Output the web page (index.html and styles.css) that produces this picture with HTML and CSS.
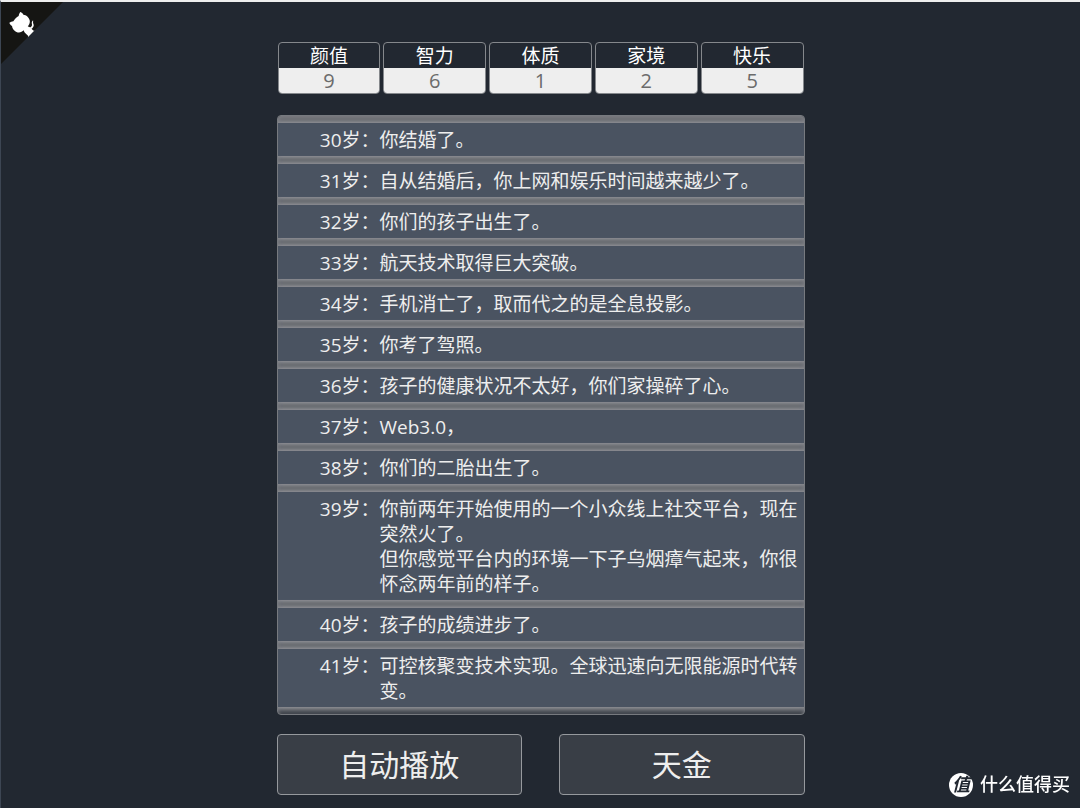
FILE: index.html
```html
<!DOCTYPE html>
<html lang="zh-CN">
<head>
<meta charset="utf-8">
<meta name="viewport" content="width=device-width, initial-scale=1">
<title>人生重开模拟器</title>
<link rel="stylesheet" href="styles.css">
</head>
<body>
<a class="corner" href="#" aria-label="GitHub">
  <svg viewBox="0 0 250 250" aria-hidden="true">
    <g transform="translate(250 0) scale(-1 1)">
      <path fill="#151513" d="M0,0 L250,250 L250,0 Z"/>
      <path fill="#fff" d="M128.3,109.0 C113.8,99.7 119.0,89.6 119.0,89.6 C122.0,82.7 120.5,78.6 120.5,78.6 C119.2,72.0 123.4,76.3 123.4,76.3 C127.3,80.9 125.5,87.3 125.5,87.3 C122.9,97.6 130.6,101.9 134.4,103.2"/>
      <path fill="#fff" d="M115.0,115.0 C114.9,115.1 118.7,116.5 119.8,115.4 L133.7,101.6 C136.9,99.2 139.9,98.4 142.2,98.6 C133.8,88.0 127.5,74.4 143.8,58.0 C148.5,53.4 154.0,51.2 159.7,51.0 C160.3,49.4 163.2,43.6 171.4,40.1 C171.4,40.1 176.1,42.5 178.8,56.2 C183.1,58.6 187.2,61.8 190.9,65.4 C194.5,69.0 197.7,73.2 200.1,77.6 C213.8,80.2 216.3,84.9 216.3,84.9 C212.7,93.1 206.9,96.0 205.4,96.6 C205.1,102.4 203.0,107.8 198.3,112.5 C181.9,128.9 168.3,122.5 157.7,114.1 C157.9,116.9 156.7,120.9 152.7,124.9 L141.0,136.5 C139.8,137.7 141.6,141.9 141.8,141.8 Z"/>
    </g>
  </svg>
</a>
<main class="game">
  <dl class="stats">
    <div class="stat"><dt>颜值</dt><dd>9</dd></div>
    <div class="stat"><dt>智力</dt><dd>6</dd></div>
    <div class="stat"><dt>体质</dt><dd>1</dd></div>
    <div class="stat"><dt>家境</dt><dd>2</dd></div>
    <div class="stat"><dt>快乐</dt><dd>5</dd></div>
  </dl>
  <ul class="log">
    <li><span class="age">30岁：</span><p>你结婚了。</p></li>
    <li><span class="age">31岁：</span><p>自从结婚后，你上网和娱乐时间越来越少了。</p></li>
    <li><span class="age">32岁：</span><p>你们的孩子出生了。</p></li>
    <li><span class="age">33岁：</span><p>航天技术取得巨大突破。</p></li>
    <li><span class="age">34岁：</span><p>手机消亡了，取而代之的是全息投影。</p></li>
    <li><span class="age">35岁：</span><p>你考了驾照。</p></li>
    <li><span class="age">36岁：</span><p>孩子的健康状况不太好，你们家操碎了心。</p></li>
    <li><span class="age">37岁：</span><p>Web3.0，</p></li>
    <li><span class="age">38岁：</span><p>你们的二胎出生了。</p></li>
    <li><span class="age">39岁：</span><p>你前两年开始使用的一个小众线上社交平台，现在突然火了。<br>但你感觉平台内的环境一下子乌烟瘴气起来，你很怀念两年前的样子。</p></li>
    <li><span class="age">40岁：</span><p>孩子的成绩进步了。</p></li>
    <li><span class="age">41岁：</span><p>可控核聚变技术实现。全球迅速向无限能源时代转变。</p></li>
  </ul>
  <div class="actions">
    <button type="button">自动播放</button>
    <button type="button">天金</button>
  </div>
</main>
<div class="watermark"><span class="badge">值</span><span>什么值得买</span></div>
</body>
</html>
```
FILE: styles.css
```css
* { box-sizing: border-box; }

body {
  margin: 0;
  min-height: 100vh;
  border-top: 2px solid #eeeeee;
  border-left: 1px solid #3d4653;
  background: #222831;
  color: #eeeeee;
  font: 19px/25px "Open Sans", "Noto Sans CJK SC", sans-serif;
}

.corner {
  position: absolute;
  top: 2px;
  left: 1px;
  width: 62px;
}
.corner svg { display: block; width: 100%; }

.game {
  max-width: 528px;
  margin: 0 auto;
  padding: 40px 0 12px;
}

.stats {
  display: grid;
  grid-template-columns: repeat(5, 1fr);
  gap: 3px;
  margin: 0 1px 21px;
  text-align: center;
}
.stat {
  overflow: hidden;
  border: 1px solid #85888c;
  border-radius: 4px;
}
.stat dt { color: #ffffff; padding-top: 1px; line-height: 24px; }
.stat dd {
  margin: 0;
  background: #eeeeee;
  color: #6b6b6b;
  font-size: 20px;
}

.log {
  display: flex;
  flex-direction: column;
  gap: 8px;
  overflow: hidden;
  margin: 0 0 19px;
  padding: 7px 0;
  list-style: none;
  border: 1px solid #777a7f;
  border-radius: 4px;
  background: #393e46;
  box-shadow: inset 0 3px 4px #7c7d82;
}
.log li {
  display: flex;
  padding: 5px 5px 3px 0;
  background: #4a5361;
  box-shadow: 0 0 6px 2px #a8a8ac;
}
.age {
  flex: 0 0 102px;
  text-align: right;
}
.log p { flex: 1; margin: 0; }

.actions {
  display: grid;
  grid-template-columns: 1fr 1fr;
  gap: 37px;
}
.actions button {
  padding: 9px;
  border: 1px solid #96999d;
  border-radius: 4px;
  background: #393e46;
  color: #eeeeee;
  font: inherit;
  font-size: 30px;
  line-height: 41px;
}

.watermark {
  position: fixed;
  right: 10px;
  bottom: 11px;
  display: flex;
  align-items: center;
  gap: 7px;
  color: #ffffff;
  font-size: 18px;
  font-weight: 500;
}
.badge {
  width: 24px;
  height: 24px;
  border-radius: 50%;
  background: #ffffff;
  color: #222831;
  font-size: 18px;
  font-style: italic;
  font-weight: 700;
  line-height: 22px;
  text-align: center;
}
```
